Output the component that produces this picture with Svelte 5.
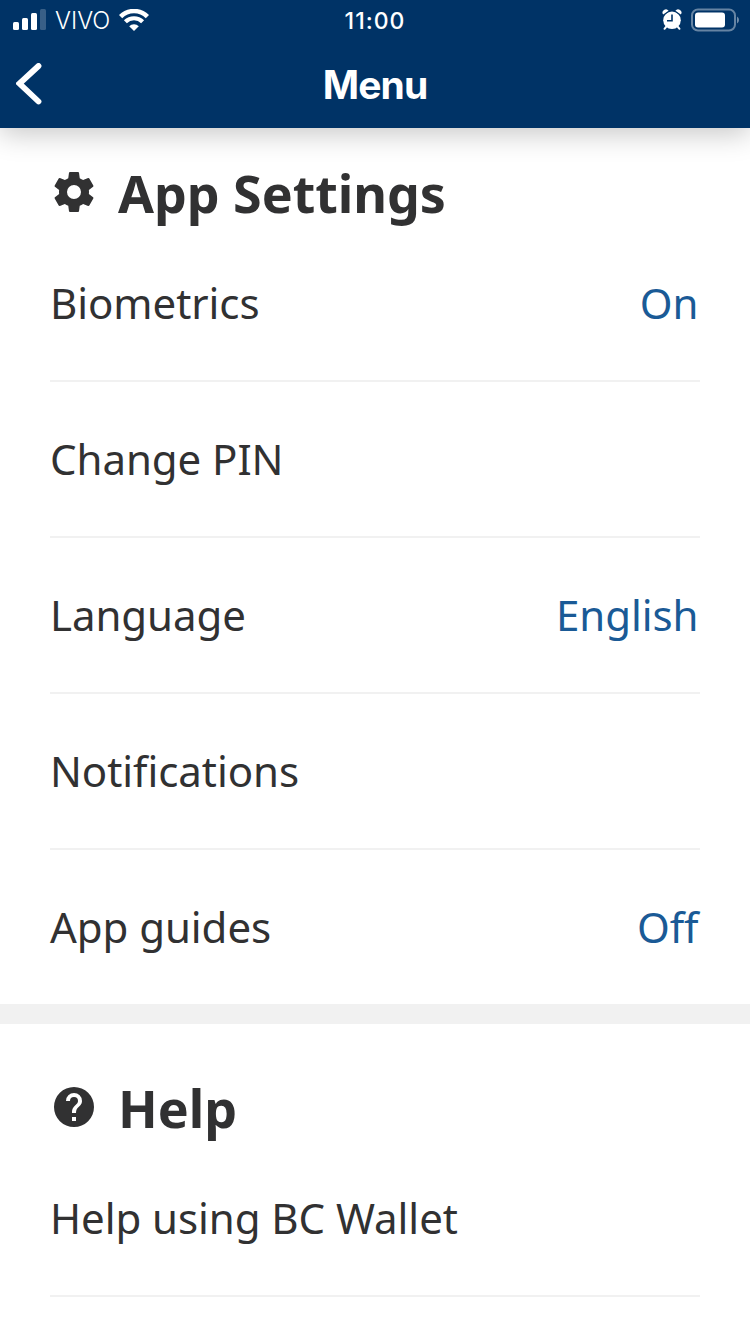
<script>
  const settings = [
    ['Biometrics', 'On'],
    ['Change PIN', ''],
    ['Language', 'English'],
    ['Notifications', ''],
    ['App guides', 'Off']
  ];
</script>

<div class="screen">
  <header>
    <div class="status">
      <div class="left">
        <svg width="34" height="22" viewBox="0 0 34 22" fill="#fff">
          <rect x="0" y="13" width="6" height="8" rx="1.5" />
          <rect x="9" y="9" width="6" height="12" rx="1.5" />
          <rect x="18" y="4" width="6" height="17" rx="1.5" />
          <rect x="27" y="0" width="6" height="21" rx="1.5" opacity=".22" />
        </svg>
        <span class="carrier">VIVO</span>
        <svg width="30" height="22" viewBox="0 0 30 22" fill="none" stroke="#fff">
          <path d="M1.600 7.600A19 19 0 0 1 28.400 7.600" stroke-width="4.600" />
          <path d="M6.400 12.800A12.200 12.200 0 0 1 23.600 12.800" stroke-width="4.200" />
          <path d="M10.200 17.300A6.800 6.800 0 0 1 19.800 17.300L15 22Z" fill="#fff" stroke="none" />
        </svg>
      </div>
      <span class="time">11:00</span>
      <div class="right">
        <svg width="20" height="22" viewBox="0 0 20 22">
          <circle cx="10" cy="11.300" r="8.800" fill="#fff" />
          <path d="M1.200 5.600A3.300 3.300 0 0 1 6.600 1.700ZM18.800 5.600A3.300 3.300 0 0 0 13.400 1.700Z" fill="#fff" />
          <path d="M1.600 6.200L7 2.200M18.400 6.200L13 2.200" stroke="#036" stroke-width=".8" />
          <path d="M4 18L2.500 19.800M16 18L17.500 19.800" stroke="#fff" stroke-width="2" stroke-linecap="round" />
          <path d="M10 5.500V11.800H5" fill="none" stroke="#036" stroke-width="1.600" />
        </svg>
        <svg width="50" height="24" viewBox="0 0 50 24">
          <rect x="1" y="1.500" width="43" height="21" rx="6" fill="none" stroke="#fff" stroke-opacity=".4" stroke-width="2" />
          <rect x="4" y="4.500" width="30" height="15" rx="3" fill="#fff" />
          <path d="M46 8.500Q48 9.500 48 12T46 15.500Z" fill="#fff" opacity=".45" />
        </svg>
      </div>
    </div>
    <div class="nav">
      <svg width="27" height="42" viewBox="0 0 27 42"><path d="M22.500 3L3.500 20.500L22.500 38.500" fill="none" stroke="#fff" stroke-width="5.800" stroke-linecap="round" stroke-linejoin="miter" /></svg>
      <h1>Menu</h1>
      <span></span>
    </div>
  </header>
  <section class="settings">
    <h2>
      <svg width="48" height="48" viewBox="0 0 24 24" fill="#313132"><path d="M12 15.500A3.500 3.500 0 0 1 8.500 12 3.500 3.500 0 0 1 12 8.500 3.500 3.500 0 0 1 15.500 12 3.500 3.500 0 0 1 12 15.500M19.430 12.970C19.470 12.650 19.500 12.330 19.500 12S19.470 11.340 19.430 11L21.540 9.370C21.730 9.220 21.780 8.950 21.660 8.730L19.660 5.270C19.540 5.050 19.270 4.960 19.050 5.050L16.560 6.050C16.040 5.660 15.500 5.320 14.870 5.070L14.500 2.420C14.460 2.180 14.250 2 14 2H10C9.750 2 9.540 2.180 9.500 2.420L9.130 5.070C8.500 5.320 7.960 5.660 7.440 6.050L4.950 5.050C4.730 4.960 4.460 5.050 4.340 5.270L2.340 8.730C2.210 8.950 2.270 9.220 2.460 9.370L4.570 11C4.530 11.340 4.500 11.670 4.500 12S4.530 12.650 4.570 12.970L2.460 14.630C2.270 14.780 2.210 15.050 2.340 15.270L4.340 18.730C4.460 18.950 4.730 19.030 4.950 18.950L7.440 17.940C7.960 18.340 8.500 18.680 9.130 18.930L9.500 21.580C9.540 21.820 9.750 22 10 22H14C14.250 22 14.460 21.820 14.500 21.580L14.870 18.930C15.500 18.670 16.040 18.340 16.560 17.940L19.050 18.950C19.270 19.030 19.540 18.950 19.660 18.730L21.660 15.270C21.780 15.050 21.730 14.780 21.540 14.630Z" /></svg>
      <span>App Settings</span>
    </h2>
    {#each settings as [label, value]}
      <div class="row"><span>{label}</span><span class="value">{value}</span></div>
    {/each}
  </section>
  <section class="help">
    <h2>
      <svg width="48" height="48" viewBox="0 0 24 24" fill="#313132"><path d="M15.070 11.250L14.170 12.170C13.450 12.890 13 13.500 13 15H11V14.500C11 13.390 11.450 12.390 12.170 11.670L13.410 10.410C13.780 10.050 14 9.550 14 9A2 2 0 0 0 10 9H8A4 4 0 0 1 16 9C16 9.880 15.640 10.670 15.070 11.250M13 19H11V17H13M12 2A10 10 0 1 0 12 22A10 10 0 0 0 12 2Z" fill-rule="evenodd" /></svg>
      <span>Help</span>
    </h2>
    <div class="row"><span>Help using BC Wallet</span></div>
    <div class="end"></div>
  </section>
</div>

<style>
  :global(body) { margin: 0; background: #fff; }
  .screen { width: 750px; height: 1334px; overflow: hidden; background: #fff; color: #313132; font-family: "Noto Sans", sans-serif; }
  header { height: 128px; background: #036; color: #fff; box-shadow: 0 6px 26px rgba(0,0,0,.22); font-family: Inter, sans-serif; }
  .status { height: 40px; display: grid; grid-template-columns: 1fr auto 1fr; align-items: center; padding: 0 9px 0 13px; }
  .left, .right { display: flex; align-items: center; }
  .right { justify-content: flex-end; gap: 9px; }
  .carrier { font-size: 23.7px; font-weight: 350; margin: 1px 9px 0 8px; }
  .time { font-size: 23px; font-weight: 500; letter-spacing: 1px; padding-top: 2px; margin-right: 4px; }
  .nav { height: 88px; display: grid; grid-template-columns: 1fr auto 1fr; align-items: center; padding: 0 16px; box-sizing: border-box; }
  h1 { margin: 0; font-size: 39px; font-weight: 650; letter-spacing: -.9px; }
  section { padding: 0 50px; box-sizing: border-box; }
  .settings { height: 876px; padding-top: 32px; }
  .help { height: 330px; padding-top: 51px; border-top: 20px solid #f1f1f1; }
  h2 { margin: 0; height: 66px; display: flex; align-items: center; gap: 20px; font-size: 52px; line-height: 68px; font-weight: 700; letter-spacing: -.04px; }
  h2 svg { position: relative; top: -1px; }
  .row { height: 154px; display: flex; align-items: center; justify-content: space-between; border-bottom: 2px solid #f1f1f1; font-size: 42px; letter-spacing: -.06px; line-height: 154px; }
  .row:last-child { border: 0; }
  .value { color: #1a5a96; padding-right: 1.5px; }
</style>
